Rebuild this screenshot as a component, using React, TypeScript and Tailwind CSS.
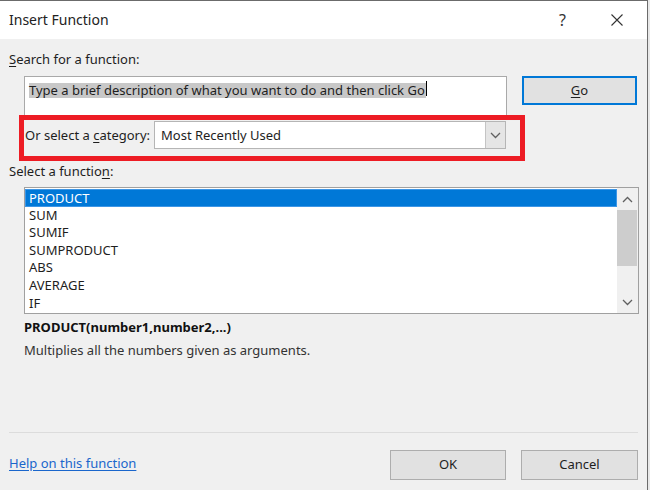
import React from "react";

const rows = ["PRODUCT", "SUM", "SUMIF", "SUMPRODUCT", "ABS", "AVERAGE", "IF"];

function Chevron({ up = false, className = "" }: { up?: boolean; className?: string }) {
  return (
    <svg width="11" height="7" viewBox="0 0 11 7" className={className}>
      <polyline
        points={up ? "1,6 5.5,1.5 10,6" : "1,1 5.5,5.5 10,1"}
        fill="none"
        stroke="#606060"
        strokeWidth="1.3"
      />
    </svg>
  );
}

export default function App() {
  return (
    <div
      className="flex w-[650px] h-[490px] bg-[#e8e8e8] text-[13px] text-[#1e1e1e]"
      style={{ fontFamily: '"Noto Sans", "Open Sans", sans-serif' }}
    >
      <div className="flex flex-col w-[648px] h-full bg-[#f0f0f0] border-t border-r border-[#6b6b6b]">
        {/* Title bar */}
        <div className="flex items-center h-[38px] bg-white pl-[9px] shrink-0">
          <span className="text-[14px] leading-[20px] text-[#222]">Insert Function</span>
          <span className="ml-auto text-[16px] leading-[20px] text-[#333] mr-[45px]">?</span>
          <svg width="12" height="12" viewBox="0 0 12 12" className="mr-[24px]">
            <path d="M0.5 0.5 L11.5 11.5 M11.5 0.5 L0.5 11.5" stroke="#333" strokeWidth="1.1" />
          </svg>
        </div>

        {/* Body */}
        <div className="flex flex-col px-[9px] grow">
          <div className="mt-[12px] leading-[16px]">
            <span className="underline underline-offset-2">S</span>earch for a function:
          </div>

          <div className="flex mt-[9px] ml-[15px] gap-[15px]">
            <div className="relative w-[483px] h-[42px] bg-white border border-[#a9a9a9] pl-[4px] pt-[4px]">
              <span className="inline-block bg-[#c8c8c8] leading-[15px] pr-[1px]">
                Type a brief description of what you want to do and then click Go
              </span>
              <span className="inline-block align-top w-px h-[15px] bg-black" />
            </div>
            <button className="w-[115px] h-[29px] bg-[#e1e1e1] border-2 border-[#0078d7] text-[13px] text-[#1e1e1e]">
              <span className="underline underline-offset-2">G</span>o
            </button>
          </div>

          {/* Red annotation box around category row */}
          <div className="relative z-10 -mt-[3px] ml-[10px] w-[506px] border-[5px] border-[#ed1c24] pt-[1px] pb-[7px] pl-[1px]">
            <div className="flex items-center">
              <span className="w-[129px] leading-[16px] whitespace-nowrap">
                Or select a <span className="underline underline-offset-2">c</span>ategory:
              </span>
              <div className="flex w-[352px] h-[28px] bg-white border border-[#b5b5b5]">
                <span className="grow pl-[6px] leading-[26px] text-[#1e1e1e]">Most Recently Used</span>
                <div className="flex items-center justify-center w-[20px] h-full bg-[#e5e5e5] border-l border-[#c4c4c4]">
                  <Chevron />
                </div>
              </div>
            </div>
          </div>

          <div className="mt-[2px] leading-[16px]">
            Select a functio<span className="underline underline-offset-2">n</span>:
          </div>

          {/* List box */}
          <div className="flex mt-[8px] ml-[15px] w-[615px] h-[127px] bg-white border border-[#a0a0a0]">
            <div className="flex flex-col grow pt-[1px]">
              {rows.map((r, i) => (
                <div
                  key={r}
                  className={
                    i === 0
                      ? "h-[17.6px] leading-[16px] pl-[3px] bg-[#0078d7] text-white border border-[#3d96e6]"
                      : "h-[17.6px] leading-[17.6px] pl-[4px]"
                  }
                >
                  {r}
                </div>
              ))}
            </div>
            <div className="flex flex-col w-[21px] h-full bg-[#f0f0f0]">
              <div className="flex items-center justify-center h-[22px]">
                <Chevron up />
              </div>
              <div className="h-[56px] mr-[1px] bg-[#cdcdcd]" />
              <div className="grow" />
              <div className="flex items-center justify-center h-[22px]">
                <Chevron />
              </div>
            </div>
          </div>

          <div className="mt-[5px] ml-[15px] leading-[16px] font-bold text-[#111]">
            PRODUCT(number1,number2,...)
          </div>
          <div className="mt-[7px] ml-[15px] leading-[16px] text-[#333]">
            Multiplies all the numbers given as arguments.
          </div>

          <div className="mt-[74px] h-px w-[629px] bg-[#dcdcdc]" />

          <div className="flex items-center mt-[17px]">
            <a className="text-[#1a66cc] underline underline-offset-2 leading-[16px] -mt-[4px]" href="#">
              Help on this function
            </a>
            <button className="ml-auto w-[116px] h-[30px] bg-[#e1e1e1] border border-[#adadad] text-[#1e1e1e]">
              OK
            </button>
            <button className="ml-[15px] w-[117px] h-[30px] bg-[#e1e1e1] border border-[#adadad] text-[#1e1e1e]">
              Cancel
            </button>
          </div>
        </div>
      </div>
      <div className="w-[2px] h-full bg-[#e8e8e8]" />
    </div>
  );
}
